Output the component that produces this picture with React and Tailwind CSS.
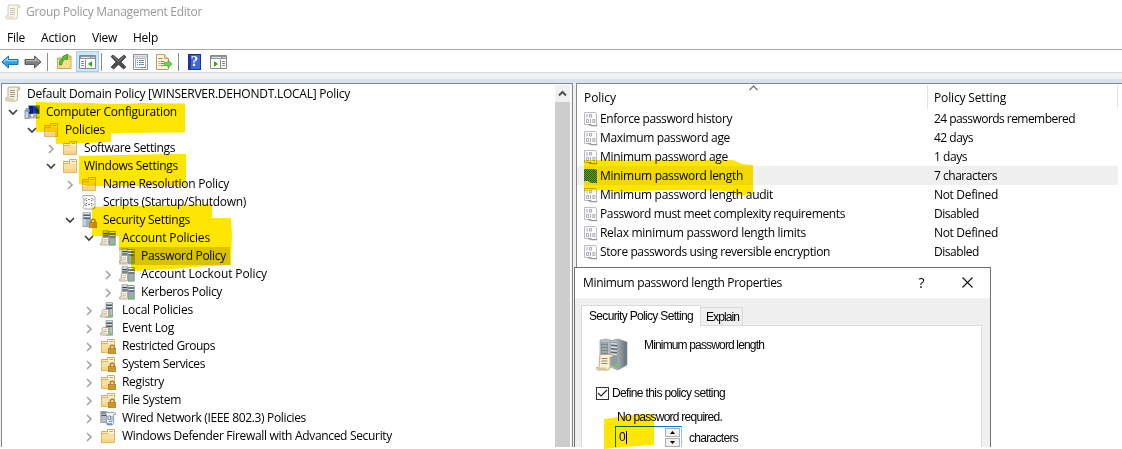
import { useLayoutEffect, useRef } from "react";

/* Text set to an exact advance width by adjusting its tracking. */
function Label({ w, className = "", children }) {
  const ref = useRef(null);
  useLayoutEffect(() => {
    const el = ref.current;
    el.style.letterSpacing = "0px";
    const natural = el.getBoundingClientRect().width;
    el.style.letterSpacing = (w - natural) / String(children).length + "px";
  }, [w, children]);
  return (
    <span ref={ref} className={"inline-block shrink-0 whitespace-pre " + className}>
      {children}
    </span>
  );
}

const Svg = ({ s = 16, children }) => (
  <svg width={s} height={s} viewBox="0 0 16 16" className="block shrink-0">
    {children}
  </svg>
);

const ScrollIcon = () => (
  <Svg>
    <path d="M4 1h9.5q1.500 0 1.500 1.600T13.300 4H12.500v8.500q0 2.500-2 2.500H2.500q-1.700 0-1.700-1.500V12H3V3q0-2 1-2z" fill="#f8f1dc" stroke="#a59b85" strokeWidth=".8" />
    <path d="M12 1.200q1.500 1 .3 2.800h2.200q.6-2.300-.8-2.800z" fill="#cbbf9d" />
    <path d="M1 12.300h8.200q-.6 1.800 1 2.500H2.500Q1 14.700 1 12.300z" fill="#ddd0ab" />
    <path d="M5 4.500h5M5 6.500h5M5 8.500h5M5 10.500h4.500" stroke="#9d9a8a" />
  </Svg>
);

const FolderShape = () => (
  <g>
    <path d="M1.500 3.500h5.500v11h-5.500z" fill="#f6d88c" stroke="#d3ad5a" />
    <path d="M7.500 1.500h7v4h-7z" fill="#fdf6dc" stroke="#d3ad5a" />
    <path d="M9.500 3.500h3.500" stroke="#c9a55a" />
    <path d="M1.500 5.500h13v9h-13z" fill="#fae0a0" stroke="#dcb968" />
    <path d="M2 4.500h5.500l1 1h5.500" fill="none" stroke="#fcedc4" />
    <path d="M2 11h12v3H2z" fill="#f6d385" />
  </g>
);

const LockShape = () => (
  <g>
    <path d="M10.300 11V9.200q0-2 1.900-2t1.900 2V11" fill="none" stroke="#a98033" strokeWidth="1.400" />
    <rect x="8.500" y="10.500" width="7.300" height="5.200" fill="#dda42f" stroke="#a9751c" strokeWidth=".7" />
    <path d="M9 12.200h6.400M9 14h6.400" stroke="#b98326" strokeWidth=".7" />
  </g>
);

const FolderIcon = () => <Svg><FolderShape /></Svg>;
const FolderLockIcon = () => <Svg><FolderShape /><LockShape /></Svg>;

const ComputerIcon = () => (
  <Svg>
    <path d="M4.500 1.500h11v8.500h-11z" fill="#1736b8" stroke="#a3abb3" />
    <path d="M5 2h4v7.500H5z" fill="#0b1c80" />
    <path d="M11 2h4v4z" fill="#6b90ea" />
    <path d="M9 10.500h4v2h2.500v2H7v-2h2z" fill="#a7b0b6" />
    <path d="M1 6.500h3.500v8H1z" fill="#c9d3da" stroke="#73808a" strokeWidth=".8" />
    <path d="M1.500 5q2-2.500 4 0v3h-4zM4 10h3v4.500H4z" fill="#8b9eaf" />
  </Svg>
);

const PaperShape = () => (
  <g>
    <path d="M3 7.500h6.500v1H8.500v5q0 1.500-1.400 1.500H.7v-2H2.200V8.500z" fill="#fbf5e3" stroke="#a3967d" strokeWidth=".8" />
    <path d="M3.500 9.800h3.500M3.500 11.500h3.500M3 13.200h3.500" stroke="#b7a98c" strokeWidth=".7" />
  </g>
);

const ServersIcon = () => (
  <Svg>
    <path d="M3 .8h5.500V12H3z" fill="#b3bec7" stroke="#7f8d99" strokeWidth=".7" />
    <path d="M3.500 2h4.500" stroke="#edf2f5" />
    <path d="M3.500 3.500h4.500M3.500 6h4.500" stroke="#33444f" />
    <path d="M9 1.500h6.300v13.700H9z" fill="#9fabb5" stroke="#73818d" strokeWidth=".7" />
    <path d="M9.500 2.500h5.500M9.500 5.500h5.500" stroke="#edf2f5" />
    <path d="M9.500 4h5.500M9.500 7h5.500" stroke="#33444f" />
    <PaperShape />
    <rect x="12.500" y="12.800" width="2" height="2" fill="#4fe31e" />
  </Svg>
);

const ServerIcon = () => (
  <Svg>
    <path d="M6 .7h6.500v14.500H6z" fill="#9fabb5" stroke="#7a8894" strokeWidth=".7" />
    <path d="M6.500 1.700h5.500M6.500 4.800h5.500" stroke="#edf2f5" />
    <path d="M6.500 3.200h5.500M6.500 6.200h5.500" stroke="#26394a" />
    <path d="M10.500 7h1.500v8h-1.500z" fill="#bcc6cd" />
    <PaperShape />
    <rect x="10.300" y="12.800" width="2" height="2" fill="#4fe31e" />
  </Svg>
);

const ServerLockIcon = () => (
  <Svg>
    <path d="M2 .7h7.500v14H2z" fill="#a4b4c0" stroke="#7d8f9e" strokeWidth=".7" />
    <path d="M2.500 1.700h6.500M2.500 4.700h6.500" stroke="#edf4f8" />
    <path d="M2.500 3.200h6.500M2.500 6.200h6.500" stroke="#293e50" />
    <path d="M2.500 7h2v7h-2z" fill="#d0dae1" />
    <LockShape />
  </Svg>
);

const ScriptIcon = () => (
  <Svg>
    <path d="M2 1.500h10.500L14 3v10q0 2-2 2H3.500l-1.700-1.800L3 12V5L2 3.500z" fill="#fcfcfc" stroke="#a5a8ac" />
    <path d="M6 4.500H5l-1 1 1 1h1M10 4.500h1l1 1-1 1h-1M7 5.500h2M6 9.500H5l-1 1 1 1h1M10 9.500h1l1 1-1 1h-1M7 10.500h2" fill="none" stroke="#696d77" strokeWidth=".9" />
  </Svg>
);

const WiredIcon = () => (
  <Svg>
    <path d="M.8 1.500h6v11h-6z" fill="#b3bec7" stroke="#8091a0" strokeWidth=".8" />
    <path d="M1.500 3h4.500M1.500 5.500h4.500" stroke="#45545f" />
    <path d="M5.500 2.500h9q1.200 0 1.200 2h-2v8q0 2.500-2 2.500H8q-1.500 0-1.500-2V4.500H5.500z" fill="#eff3f7" stroke="#8b99aa" strokeWidth=".9" />
    <path d="M8 6h2.500v3.500H8zM12 6v5.500H8.500" fill="none" stroke="#7b8da3" />
    <path d="M7 14h5" stroke="#5f82a8" strokeWidth="1.500" />
  </Svg>
);

function PolicyIcon({ selected }) {
  return (
    <svg width="14" height="16" viewBox="0 0 14 16" className="block shrink-0">
      {selected && (
        <defs>
          <pattern id="dither" width="2" height="2" patternUnits="userSpaceOnUse" shapeRendering="crispEdges">
            <rect width="2" height="2" fill="#86a888" />
            <path d="M0 0h1v1H0zM1 1h1v1H1z" fill="#0a7030" />
          </pattern>
        </defs>
      )}
      {selected ? (
        <path d="M0 1h11l2 1v13H7l-3-2H0z" fill="url(#dither)" />
      ) : (
        <g>
          <path d="M.5 1.500h11L12.500 3v10l.5 1.500H6.500L4 13.500H.5z" fill="#fcfcfd" stroke="#bcbcbf" />
          <g fill="none" stroke="#a3a3b6" strokeWidth=".9">
            <path d="M3 3v3.500M5.500 3.500h2v2.500h-2zM2.500 8.500h2v3h-2zM6.500 8v4M8.800 8.500h2v3h-2z" />
            <path d="M4 13.700h2.500l1 1h5.500" stroke="#97979a" strokeWidth="1.300" />
          </g>
        </g>
      )}
    </svg>
  );
}

function Chevron({ kind }) {
  return (
    <span className="flex h-4 w-[19px] shrink-0 items-center justify-center pr-[3px]">
      {kind === "open" && (
        <svg width="10" height="8" viewBox="0 0 10 8"><path d="M1 2l4 4 4-4" fill="none" stroke="#404040" strokeWidth="1.700" /></svg>
      )}
      {kind === "closed" && (
        <svg width="8" height="10" viewBox="0 0 8 10" className="relative top-[1px]"><path d="M2 1l4 4-4 4" fill="none" stroke="#a6a6a6" strokeWidth="1.700" /></svg>
      )}
    </span>
  );
}

const tree = [
  [0, "", ScrollIcon, "Default Domain Policy [WINSERVER.DEHONDT.LOCAL] Policy", 323],
  [1, "open", ComputerIcon, "Computer Configuration", 131],
  [2, "open", FolderIcon, "Policies", 40],
  [3, "closed", FolderIcon, "Software Settings", 91],
  [3, "open", FolderIcon, "Windows Settings", 94],
  [4, "closed", FolderIcon, "Name Resolution Policy", 126],
  [4, "", ScriptIcon, "Scripts (Startup/Shutdown)", 143],
  [4, "open", ServerLockIcon, "Security Settings", 87],
  [5, "open", ServersIcon, "Account Policies", 88],
  [6, "", ServersIcon, "Password Policy", 85],
  [6, "closed", ServersIcon, "Account Lockout Policy", 126],
  [6, "closed", ServersIcon, "Kerberos Policy", 81],
  [5, "closed", ServerIcon, "Local Policies", 71],
  [5, "closed", ServerIcon, "Event Log", 52],
  [5, "closed", FolderLockIcon, "Restricted Groups", 93],
  [5, "closed", FolderLockIcon, "System Services", 83],
  [5, "closed", FolderLockIcon, "Registry", 42],
  [5, "closed", FolderLockIcon, "File System", 59],
  [5, "closed", WiredIcon, "Wired Network (IEEE 802.3) Policies", 184],
  [5, "closed", FolderIcon, "Windows Defender Firewall with Advanced Security", 270],
];

const policies = [
  ["Enforce password history", 132, "24 passwords remembered", 141],
  ["Maximum password age", 130, "42 days", 39],
  ["Minimum password age", 128, "1 days", 33],
  ["Minimum password length", 143, "7 characters", 63],
  ["Minimum password length audit", 173, "Not Defined", 64],
  ["Password must meet complexity requirements", 245, "Disabled", 45],
  ["Relax minimum password length limits", 206, "Not Defined", 64],
  ["Store passwords using reversible encryption", 230, "Disabled", 45],
];

function Arrow({ flip, fill, light, stroke }) {
  return (
    <svg width="18" height="14" viewBox="0 0 18 14" className={flip ? "block -scale-x-100" : "block"}>
      <path d="M1 7l6.500-6v3.500H17v5H7.500V13z" fill={fill} stroke={stroke} strokeLinejoin="round" />
      <path d="M3 6.700l3.500-3v2H16" fill="none" stroke={light} strokeWidth="1.200" />
    </svg>
  );
}

const PaneIcon = ({ right }) => (
  <svg width="17" height="14" viewBox="0 0 17 14" className="block">
    <path d="M.5.5h16v13H.5z" fill="#fff" stroke="#858a8e" />
    <path d="M1 1h15v3H1z" fill="#8f969c" />
    <path d="M2 2.500h9" stroke="#e3e8ec" />
    <path d="M12.500 2.500h1M14.500 2.500h1" stroke="#fff" />
    <path d={right ? "M10.500 4.500v9" : "M6.500 4.500v9"} stroke="#858a8e" />
    <path d={right ? "M12 6.500h3M12 8.500h3M12 10.500h3" : "M2 6.500h3M2 8.500h3M2 10.500h3"} stroke="#858a8e" />
    <path d={right ? "M4 6l4 3-4 3z" : "M13 6L9 9l4 3z"} fill="#37a51c" />
  </svg>
);

const Divider = () => <span className="h-[18px] w-px bg-[#8c8c8c]" />;

function Toolbar() {
  return (
    <div className="flex h-[24px] shrink-0 items-center border-t border-[#a6a6a6] border-b border-b-[#dadada] bg-white pl-[1px] pt-[1px]">
      <Arrow fill="#2ba3e8" light="#8cdcff" stroke="#1971b5" />
      <span className="w-[5px]" />
      <Arrow flip fill="#7e7e7e" light="#b8b8b8" stroke="#5b5b5b" />
      <span className="w-[5px]" /><Divider /><span className="w-[8px]" />
      <svg width="17" height="17" viewBox="0 0 17 17">
        <path d="M1.500 5h6l1-2h6.500v12.500H1.500z" fill="#eac46b" stroke="#cba552" />
        <path d="M2 7h12.500v8H2z" fill="#f9dd93" />
        <path d="M3.500 12Q3 6 7.500 5L6.500 3.500 12 1 11 7 9.500 5.800Q6.500 7 5.500 12z" fill="#56c234" stroke="#308b1b" strokeWidth=".8" />
      </svg>
      <span className="w-[3px]" />
      <span className="flex h-[21px] w-[23px] items-center justify-center border border-[#99d1ff] bg-[#cce8ff] pt-[1px]"><PaneIcon /></span>
      <span className="w-[2px]" /><Divider /><span className="w-[8px]" />
      <svg width="17" height="16" viewBox="0 0 17 16">
        <path d="M1 2.500L3 1l5.500 4.500L14 1l2 2-5 5 5 5-2.500 2-5-4.500L3.500 15 1 13l5-5z" fill="#4d4d4d" stroke="#353535" strokeWidth=".7" />
        <path d="M3 2.500l5.500 4.800L14 2.500" fill="none" stroke="#858585" />
      </svg>
      <span className="w-[6px]" />
      <svg width="15" height="16" viewBox="0 0 15 16">
        <path d="M.5.5h14v15H.5z" fill="#fff" stroke="#8b9095" />
        <path d="M1 1.500h13v2H1z" fill="#c5cace" />
        <path d="M2.500 4.500h10v9h-10z" fill="#fff" stroke="#a7b1ba" />
        <path d="M4 6.500h1M6 6.500h5M4 8.500h1M6 8.500h5M4 10.500h1M6 10.500h5" stroke="#6391b9" />
        <path d="M8 13.500h2M11 13.500h2" stroke="#777" />
      </svg>
      <span className="w-[8px]" />
      <svg width="17" height="16" viewBox="0 0 17 16">
        <path d="M.5.5h8l4 4v11H.5z" fill="#fff6d8" stroke="#b49e67" />
        <path d="M8.500.5v4h4" fill="#f3dfa4" stroke="#b49e67" />
        <path d="M2.500 4.500h4M2.500 7.500h1M4.500 7.500h4M2.500 9.500h1M4.500 9.500h4M2.500 11.500h1M4.500 11.500h4" stroke="#8a8672" />
        <path d="M8.500 8.500H12v-2.500l4 4-4 4v-2.500H8.500z" fill="#6ccf4c" stroke="#49a53a" strokeWidth=".7" />
      </svg>
      <span className="w-[5px]" /><Divider /><span className="w-[9px]" />
      <span className="flex h-4 w-[13px] items-center justify-center border border-[#17319b] bg-[linear-gradient(90deg,#203d99_0,#203d99_2px,#4268d7_2px)] font-['Liberation_Serif',serif] text-[15px] font-bold leading-none text-white">?</span>
      <span className="w-[9px]" />
      <PaneIcon right />
    </div>
  );
}

function TreePanel() {
  return (
    <section className="flex h-full w-[572px] border-x border-t border-[#828790] bg-white">
      <div className="min-w-0 flex-1 pt-[1px]">
        {tree.map(([level, kind, Icon, text, w]) => (
          <div key={text} className="flex h-[18px] items-center" style={{ paddingLeft: Math.max(3, level * 19 - 16) }}>
            {level > 0 && <Chevron kind={kind} />}
            <div className={text === "Password Policy" ? "flex h-[18px] w-[111px] items-center bg-[#d9d9d9]" : "flex h-[18px] items-center"}>
              <Icon />
              <span className="w-[6px] shrink-0" />
              <Label w={w}>{text}</Label>
            </div>
          </div>
        ))}
      </div>
      <div className="flex h-full w-[17px] flex-col border-r border-r-[#f0f0f0] pt-[1px] pr-[1px]">
        <div className="flex h-[17px] items-center justify-center bg-[#f0f0f0]">
          <svg width="9" height="7" viewBox="0 0 9 7"><path d="M1 5.500L4.500 2 8 5.500" fill="none" stroke="#505050" strokeWidth="2" /></svg>
        </div>
        <div className="flex-1 bg-[#cdcdcd]" />
      </div>
    </section>
  );
}

function ListPanel() {
  return (
    <section className="relative h-full flex-1 border-l border-t border-[#828790] bg-white">
      <svg width="9" height="6" viewBox="0 0 9 6" className="absolute left-[172px] top-[1px]"><path d="M.5 5l4-4 4 4" fill="none" stroke="#666" strokeWidth="1.100" /></svg>
      <div className="mr-[4px] mt-[1px] flex h-[24px] items-center">
        <div className="flex h-full w-[351px] items-center border-r border-[#e2e2e2] pl-[7px] pt-[1px]"><Label w={32}>Policy</Label></div>
        <div className="flex h-full flex-1 items-center border-r border-[#e2e2e2] pl-[6px] pt-[1px]"><Label w={72}>Policy Setting</Label></div>
      </div>
      {policies.map(([name, nw, value, vw], i) => (
        <div key={name} className={i === 3 ? "mr-[4px] flex h-[19px] items-center bg-[#f0f0f0]" : "mr-[4px] flex h-[19px] items-center"}>
          <div className="flex w-[357px] items-center gap-[2px] pl-[7px]">
            <PolicyIcon selected={i === 3} />
            <Label w={nw}>{name}</Label>
          </div>
          <Label w={vw}>{value}</Label>
        </div>
      ))}
    </section>
  );
}

const BigServers = () => (
  <svg width="32" height="34" viewBox="0 0 32 34" className="block">
    <defs>
      <linearGradient id="side" x1="0" x2="1"><stop offset="0" stopColor="#d5dadc" /><stop offset="1" stopColor="#657078" /></linearGradient>
    </defs>
    <path d="M4 2l6-1 8 2v23l-6 2-8-4z" fill="#b7bec2" stroke="#8f989d" strokeWidth=".6" />
    <path d="M5 4h7v17H5z" fill="#79858c" />
    <path d="M5.500 5h6M5.500 8h6M5.500 11h6M5.500 14h6" stroke="#c3ccd0" strokeWidth="1.200" />
    <path d="M14 3l8-2 9 3v23l-9 5-8-3z" fill="url(#side)" stroke="#858f95" strokeWidth=".6" />
    <path d="M14.500 3.500l7 1v26l-7-3z" fill="#929da3" />
    <path d="M15 5.500l6 .6M15 9l6 .6M15 12.500l6 .6M15 16l6 .6" stroke="#dce1e3" strokeWidth="1.300" />
    <path d="M15 7.200l6 .6M15 10.700l6 .6M15 14.200l6 .6" stroke="#525e65" />
    <path d="M4 16.500h12q1.200 1 0 2.500h-2v10q0 3-3 3H2q-1.500 0-1.500-2.500H3z" fill="#fbf1d5" stroke="#bba678" strokeWidth=".9" />
    <path d="M5.500 20.500h6M5.500 23h6M5.500 25.500h6" stroke="#91866f" />
    <path d="M1 29.500h9q0 2 1.500 2.500H2.500z" fill="#dac690" />
    <circle cx="20" cy="27.500" r="1.400" fill="#52e020" />
  </svg>
);

function Dialog() {
  return (
    <section className="absolute left-[574px] top-[267px] flex h-[180px] w-[417px] flex-col overflow-hidden border-x border-t border-[#707070] bg-[#f0f0f0]">
      <div className="flex h-[30px] shrink-0 items-center bg-white pl-[8px]">
        <Label w={199}>Minimum password length Properties</Label>
        <span className="ml-auto w-[7px] text-center text-[14px] leading-none">?</span>
        <svg width="11" height="11" viewBox="0 0 11 11" className="-mt-[2px] ml-[37px] mr-[17px]"><path d="M.5.5l10 10M10.500.5l-10 10" stroke="#111" strokeWidth="1.100" /></svg>
      </div>
      <div className="ml-[6px] mr-[8px] flex flex-1 flex-col pt-[7px] font-['Liberation_Sans',sans-serif]">
        <div className="flex h-[20px] shrink-0 items-end">
          <div className="z-10 -mb-px flex h-[21px] w-[120px] items-center border-x border-t border-[#dadada] bg-white pl-[7px]"><Label w={104}>Security Policy Setting</Label></div>
          <div className="flex h-[18px] w-[42px] items-center border-r border-t border-[#dadada] pl-[5px]"><Label w={33}>Explain</Label></div>
        </div>
        <div className="flex-1 border-x border-t border-[#dadada] bg-white pl-[14px]">
          <div className="flex pt-[12px]">
            <BigServers />
            <Label w={120} className="ml-[16px] mt-[-1px]">Minimum password length</Label>
          </div>
          <div className="mt-[14px] flex h-[14px] items-center gap-[3px]">
            <span className="flex h-[13px] w-[13px] items-center justify-center border border-[#333] bg-white">
              <svg width="11" height="9" viewBox="0 0 11 9"><path d="M1 4l3 3 6-6" fill="none" stroke="#222" strokeWidth="1.100" /></svg>
            </span>
            <Label w={113}>Define this policy setting</Label>
          </div>
          <div className="mt-[8px] flex h-[18px] items-center pl-[21px]"><Label w={105}>No password required.</Label></div>
          <div className="flex h-[28px] pl-[19px]">
            <div className="flex w-[67px] items-start border-l border-t border-r border-[#0078d7] border-r-[#9cc0de]">
              <span className="flex flex-1 items-center pl-[3px] pt-[2px] text-[12px]">0<span className="h-[13px] w-px bg-black" /></span>
              <span className="flex w-[16px] flex-col gap-[1px] pr-[1px] pt-[1px]">
                <span className="flex h-[9px] items-center justify-center border border-[#adadad] bg-[#f0f0f0]"><svg width="5" height="3"><path d="M0 3l2.500-3L5 3z" /></svg></span>
                <span className="flex h-[9px] items-center justify-center border border-[#adadad] bg-[#f0f0f0]"><svg width="5" height="3"><path d="M0 0l2.500 3L5 0z" /></svg></span>
              </span>
            </div>
            <Label w={49} className="ml-[7px] mt-[4px]">characters</Label>
          </div>
        </div>
      </div>
    </section>
  );
}

const Highlighter = () => (
  <svg width="1122" height="449" viewBox="0 0 1122 449" className="pointer-events-none absolute left-0 top-0 z-20 mix-blend-multiply" fill="#ffe600">
    <path d="M36 102L90 103Q120 105 140 103L185 103.500V132.500L111 133V142L56 144 55 132H36z" />
    <path d="M79 156L120 155 170 154H186V186H88L79 184z" />
    <path d="M92 207Q120 205 140 206L212 204V218L231 218 232 235 231 265Q200 266 172 269 L133 271 131 266V250H119V236H92z" />
    <path d="M584 160H733L742 164 753 165V194L740 195.500 730 193Q725 190 715 190.500 670 189 620 192L600 190 584 191z" />
    <path d="M604 419L632 415 654 414V445L623 447 604 449z" />
  </svg>
);

export default function App() {
  return (
    <main className="relative isolate h-[449px] w-[1122px] overflow-hidden bg-white font-['Open_Sans',sans-serif] text-[12px] leading-[16px] text-black">
      <div className="flex h-[447px] flex-col overflow-hidden">
        <header className="flex h-[24px] shrink-0 items-center gap-[5px] pl-[5px] text-[#999]">
          <span className="opacity-60"><ScrollIcon /></span>
          <Label w={176}>Group Policy Management Editor</Label>
        </header>
        <nav className="flex h-[25px] shrink-0 items-center gap-[16px] pl-[7px] pt-[2px]">
          <Label w={18}>File</Label>
          <Label w={35}>Action</Label>
          <Label w={25}>View</Label>
          <Label w={25}>Help</Label>
        </nav>
        <Toolbar />
        <div className="h-[6px] shrink-0 bg-[#f0f0f0]" />
        <div className="flex min-h-0 flex-1 gap-[3px] bg-[linear-gradient(#d6e3f0_0,#d6e3f0_4px,#f0f0f0_4px)] pl-[1px] pt-[4px]">
          <TreePanel />
          <ListPanel />
        </div>
      </div>
      <Dialog />
      <Highlighter />
    </main>
  );
}
